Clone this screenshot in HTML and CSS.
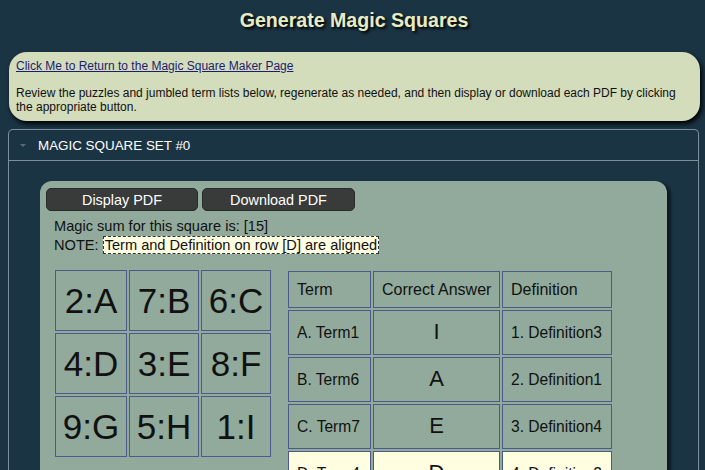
FILE: index.html
```html
<!DOCTYPE html>
<html>
<head>
<meta charset="utf-8">
<link rel="stylesheet" href="styles.css">
</head>
<body>
<h1 class="title">Generate Magic Squares</h1>
<div class="info">
  <a class="back" href="#">Click Me to Return to the Magic Square Maker Page</a>
  <p class="intro">Review the puzzles and jumbled term lists below, regenerate as needed, and then display or download each PDF by clicking the appropriate button.</p>
</div>
<div class="accordion">
  <div class="acc-head">
    <span class="caret"></span>
    <span class="acc-title">MAGIC SQUARE SET #0</span>
  </div>
  <div class="acc-body">
    <div class="panel">
      <div class="btns">
        <button class="btn">Display PDF</button>
        <button class="btn">Download PDF</button>
      </div>
      <div class="meta">
        <div>Magic sum for this square is: [15]</div>
        <div>NOTE: <span class="note">Term and Definition on row [D] are aligned</span></div>
      </div>
      <div class="work">
        <table class="square">
          <tr><td class="s1">2:A</td><td class="s2">7:B</td><td class="s3">6:C</td></tr>
          <tr><td>4:D</td><td>3:E</td><td>8:F</td></tr>
          <tr><td>9:G</td><td>5:H</td><td>1:I</td></tr>
        </table>
        <table class="terms">
          <tr class="hd"><td class="c1">Term</td><td class="c2">Correct Answer</td><td class="c3">Definition</td></tr>
          <tr><td>A. Term1</td><td class="ans">I</td><td>1. Definition3</td></tr>
          <tr><td>B. Term6</td><td class="ans">A</td><td>2. Definition1</td></tr>
          <tr><td>C. Term7</td><td class="ans">E</td><td>3. Definition4</td></tr>
          <tr class="hl"><td>D. Term4</td><td class="ans">D</td><td>4. Definition2</td></tr>
        </table>
      </div>
    </div>
  </div>
</div>
</body>
</html>
```
FILE: styles.css
```css
html, body {
  margin: 0;
  background: #1b3444;
}
body {
  padding: 0 5px 0 8px;
  font-family: "Liberation Sans", Arial, sans-serif;
  overflow: hidden;
  height: 470px;
}
.title {
  margin: 0;
  padding-top: 9px;
  height: 52px;
  box-sizing: border-box;
  text-align: center;
  font-size: 19.6px;
  font-weight: bold;
  color: #e9ecc3;
  text-shadow: 2px 2px 3px #000;
}
.info {
  margin-left: 1px;
  background: #d3dcbb;
  border-radius: 18px;
  padding: 7px 7px 7px 7px;
  box-shadow: 2px 3px 5px #000;
  font-size: 12px;
  line-height: 14px;
  color: #111;
}
.back {
  display: block;
  color: #1c1c70;
  text-decoration: underline;
}
.intro {
  margin: 13px 0 0 0;
}
.accordion {
  margin-top: 8px;
  border: 1px solid #7a909c;
  border-radius: 5px;
  border-bottom: none;
  width: 691px;
  box-sizing: border-box;
}
.acc-head {
  height: 30px;
  border-bottom: 1px solid #7a909c;
  display: flex;
  align-items: center;
  padding-left: 11px;
}
.caret {
  width: 0;
  height: 0;
  border-left: 3px solid transparent;
  border-right: 3px solid transparent;
  border-top: 3px solid #5d6b74;
  margin-right: 12px;
}
.acc-title {
  color: #fff;
  font-size: 13.4px;
}
.acc-body {
  padding: 20px 31px 0 31px;
}
.panel {
  background: #91aa9b;
  border-radius: 12px 12px 0 0;
  box-shadow: 4px 2px 3px #0c1a22;
  padding: 7px 6px 0 6px;
  height: 300px;
}
.btns {
  display: flex;
  gap: 4px;
}
.btn {
  width: 152px;
  height: 23px;
  background: #393a3a;
  color: #fff;
  border: 1px solid #2a2a2a;
  border-radius: 5px;
  font-family: "Liberation Sans", Arial, sans-serif;
  font-size: 14.4px;
  padding: 0;
}
.btn + .btn {
  width: 153px;
}
.meta {
  margin-top: 6px;
  padding-left: 8px;
  font-size: 14.6px;
  line-height: 19px;
  color: #111;
}
.note {
  background: #fffde2;
  border: 1px dashed #333;
  padding: 0 1px;
}
.work {
  display: flex;
  align-items: flex-start;
  gap: 15px;
  margin-top: 15px;
  padding-left: 9px;
}
.square {
  border-collapse: separate;
  border-spacing: 2px;
  margin: -2px;
}
.square td {
  border: 1px solid #4a5b88;
  height: 59px;
  width: 68px;
  text-align: center;
  font-size: 35px;
  color: #111;
  padding: 0;
}
.square .s1 { width: 70px; }
.square .s2 { width: 67px; }
.square .s3 { width: 68px; }
.terms {
  border-collapse: separate;
  border-spacing: 2px;
  margin: -1px 0 0 0;
  table-layout: fixed;
}
.terms td {
  box-sizing: border-box;
  border: 1px solid #4a5b88;
  height: 45px;
  padding: 0 0 0 8px;
  font-size: 15.6px;
  color: #111;
}
.terms .hd td {
  height: 37px;
  font-size: 16px;
}
.terms .c1 { width: 83px; }
.terms .c2 { width: 127px; }
.terms .c3 { width: 110px; }
.terms td.ans {
  text-align: center;
  padding: 0 0 2px 0;
  font-size: 22px;
}
.terms .hl td {
  background: #fffee1;
}
```
